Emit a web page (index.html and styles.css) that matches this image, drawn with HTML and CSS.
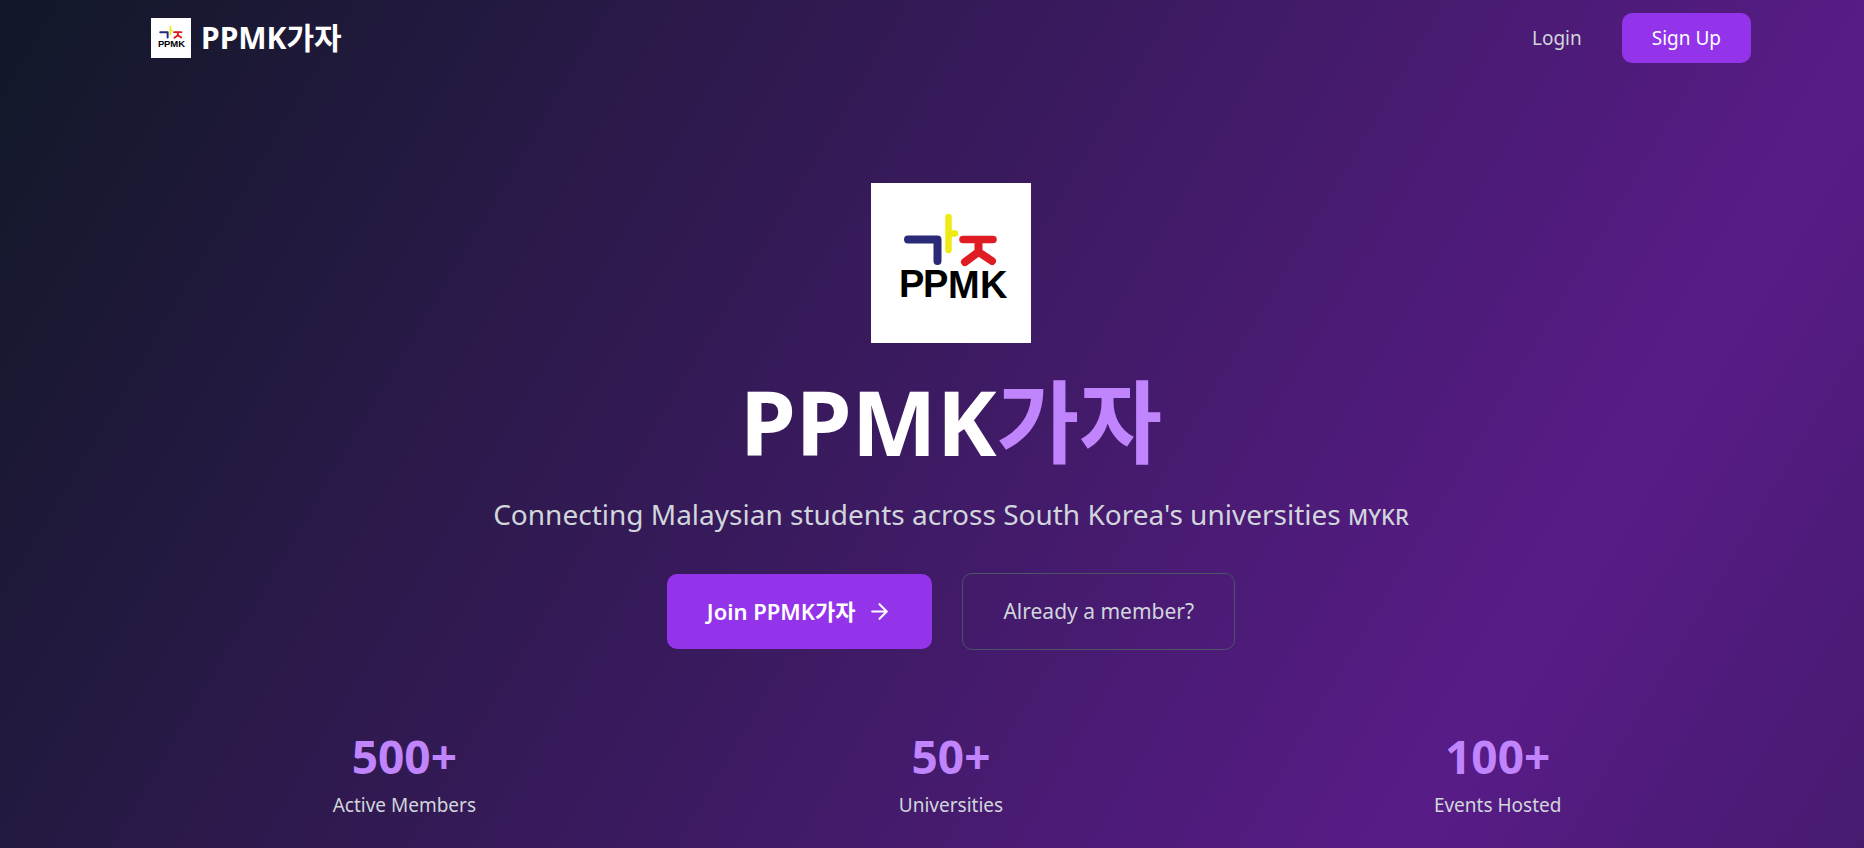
FILE: index.html
```html
<!DOCTYPE html>
<html lang="en">

<head>
    <meta charset="UTF-8">
    <meta name="viewport" content="width=device-width, initial-scale=1.0">
    <title>PPMK가자</title>
    <link rel="stylesheet" href="styles.css">
</head>

<body>
    <nav class="nav container">
        <a class="brand" href="#">
            <svg class="brand-logo" viewBox="0 0 160 160" role="img" aria-label="PPMK logo">
                <rect width="160" height="160" fill="#fff" />
                <g fill="none" stroke-linecap="round" stroke-linejoin="round">
                    <path d="M37 56.500H66.500V78" stroke="#2b2a78" stroke-width="8" />
                    <path d="M77.500 34V67M78 50.500H84" stroke="#f0ea14" stroke-width="6.500" />
                    <path d="M92 56.500H122" stroke="#df1c24" stroke-width="7.500" />
                    <path d="M107.500 58V69L94 79M107.500 69L121 78" stroke="#df1c24" stroke-width="8" />
                </g>
                <text class="logo-text" x="28" y="114">P</text>
                <text class="logo-text" x="52" y="114">P</text>
                <text class="logo-text" x="77" y="115">M</text>
                <text class="logo-text" x="109" y="115">K</text>
            </svg>
            <span>PPMK가자</span>
        </a>
        <div class="nav-links">
            <a class="login" href="#login">Login</a>
            <a class="signup" href="#signup">Sign Up</a>
        </div>
    </nav>

    <main class="container">
        <section class="hero">
            <svg class="hero-logo" viewBox="0 0 160 160" role="img" aria-label="PPMK logo">
                <rect width="160" height="160" fill="#fff" />
                <g fill="none" stroke-linecap="round" stroke-linejoin="round">
                    <path d="M37 56.500H66.500V78" stroke="#2b2a78" stroke-width="8" />
                    <path d="M77.500 34V67M78 50.500H84" stroke="#f0ea14" stroke-width="6.500" />
                    <path d="M92 56.500H122" stroke="#df1c24" stroke-width="7.500" />
                    <path d="M107.500 58V69L94 79M107.500 69L121 78" stroke="#df1c24" stroke-width="8" />
                </g>
                <text class="logo-text" x="28" y="114">P</text>
                <text class="logo-text" x="52" y="114">P</text>
                <text class="logo-text" x="77" y="115">M</text>
                <text class="logo-text" x="109" y="115">K</text>
            </svg>
            <h1>PPMK<span>가자</span></h1>
            <p class="tagline">Connecting Malaysian students across South Korea's universities <span>MYKR</span></p>
            <div class="actions">
                <a class="btn btn-primary" href="#signup">
                    Join PPMK가자
                    <svg class="arrow" viewBox="0 0 24 24" aria-hidden="true"><path d="M5 12h14M12 5l7 7-7 7" /></svg>
                </a>
                <a class="btn btn-outline" href="#login">Already a member?</a>
            </div>
        </section>

        <section class="stats">
            <div class="stat">
                <div class="number">500+</div>
                <div class="label">Active Members</div>
            </div>
            <div class="stat">
                <div class="number">50+</div>
                <div class="label">Universities</div>
            </div>
            <div class="stat">
                <div class="number">100+</div>
                <div class="label">Events Hosted</div>
            </div>
        </section>
    </main>
</body>

</html>
```
FILE: styles.css
```css
* {
    box-sizing: border-box;
}

body {
    margin: 0;
    min-height: 100vh;
    padding-left: 38px;
    font-family: "Noto Sans", "Noto Sans CJK KR", sans-serif;
    font-size: 19px;
    line-height: 30px;
    color: #d1d5dc;
    background-color: #111827;
    background-image: linear-gradient(to bottom right, #111827, #581c87, #111827);
    background-size: calc(100% + 38px) 3200px;
    background-repeat: no-repeat;
}

a {
    color: inherit;
    text-decoration: none;
}

h1,
p {
    margin: 0;
}

.container {
    max-width: 1600px;
    margin: 0 auto;
}

.nav {
    display: flex;
    justify-content: space-between;
    align-items: center;
    padding: 13px 0;
}

.brand {
    display: flex;
    align-items: center;
    gap: 10px;
    font-size: 30px;
    font-weight: 700;
    color: #fff;
}

.brand-logo {
    width: 40px;
    height: 40px;
}

.logo-text {
    font-family: "Liberation Sans", Arial, sans-serif;
    font-size: 38px;
    font-weight: 700;
    fill: #000;
}

.nav-links {
    display: flex;
    align-items: center;
    gap: 40px;
}

.signup {
    padding: 10px 30px;
    border-radius: 10px;
    background-color: #9333ea;
    color: #fff;
}

.hero {
    display: flex;
    flex-direction: column;
    align-items: center;
    padding-top: 107px;
    text-align: center;
}

.hero-logo {
    width: 160px;
    height: 160px;
}

h1 {
    margin-top: 33px;
    font-size: 90px;
    line-height: 90px;
    font-weight: 700;
    color: #fff;
}

h1 span,
.number {
    color: #c084fc;
}

.tagline {
    margin-top: 28px;
    font-size: 28px;
    line-height: 40px;
}

.tagline span {
    font-size: 22px;
    font-weight: 500;
}

.actions {
    display: flex;
    flex-wrap: wrap;
    justify-content: center;
    align-items: center;
    gap: 30px;
    margin-top: 37px;
}

.btn {
    display: flex;
    align-items: center;
    gap: 12px;
    border-radius: 10px;
    font-size: 22px;
    line-height: 35px;
}

.btn-primary {
    padding: 20px 40px;
    background-color: #9333ea;
    color: #fff;
    font-weight: 600;
}

.btn-outline {
    padding: 20px 40px;
    border: 1px solid #4a5565;
    font-size: 21px;
}

.arrow {
    width: 25px;
    height: 25px;
    fill: none;
    stroke: currentColor;
    stroke-width: 2;
    stroke-linecap: round;
    stroke-linejoin: round;
}

.stats {
    display: grid;
    grid-template-columns: repeat(3, 1fr);
    gap: 40px;
    padding: 81px 0 20px;
    text-align: center;
}

.number {
    font-size: 46px;
    line-height: 50px;
    font-weight: 700;
}

.label {
    margin-top: 9px;
}
```
